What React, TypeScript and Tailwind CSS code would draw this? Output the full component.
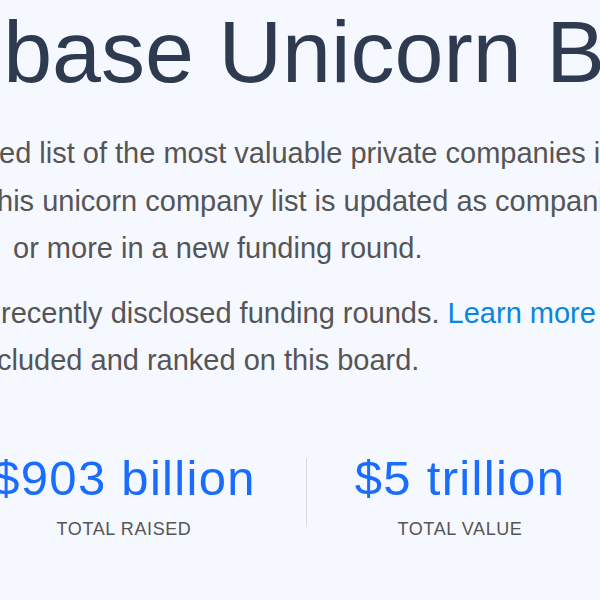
import React from "react";

const font = { fontFamily: '"Liberation Sans", Arial, sans-serif' };

type LineProps = { prefix: string; prefixClass: string; children: React.ReactNode };

// the cut-off start of each line sits in a right-aligned cell that overflows to the left
const Line: React.FC<LineProps> = ({ prefix, prefixClass, children }) => (
  <div className="flex whitespace-nowrap">
    <span className={`${prefixClass} shrink-0 flex justify-end`}>{prefix}</span>
    <span className="whitespace-pre">{children}</span>
  </div>
);

const Stat: React.FC<{ value: string; label: string; widthClass: string }> = ({ value, label, widthClass }) => (
  <div className={`${widthClass} shrink-0 flex flex-col items-center`}>
    <div className="text-[49px] leading-[66px] tracking-[1.3px] text-[#1a6cff] whitespace-nowrap">{value}</div>
    <div className="mt-[6px] text-[18px] leading-6 tracking-[0.6px] text-[#555555] uppercase whitespace-nowrap">{label}</div>
  </div>
);

export default function App() {
  return (
    <div className="w-[600px] h-[600px] overflow-hidden bg-[#f5f8ff]" style={font}>
      <div className="-ml-[606px] pt-[8px]">
        <h1 className="flex whitespace-nowrap text-[88px] leading-[88px] font-normal text-[#2e3a4f]">
          <span className="w-[800px] shrink-0 flex justify-end">The Crunchbase</span>
          <span className="whitespace-pre"> Unicorn Board</span>
        </h1>
      </div>

      <div className="-ml-[600px] mt-[34px] text-[29px] leading-[47.5px] text-[#555555]">
        <Line prefix="The Crunchbase Unicorn Board is a curat" prefixClass="w-[599px]">
          ed list of the most valuable private companies in the world.
        </Line>
        <Line prefix="Powered by Crunchbase's comprehensive data, t" prefixClass="w-[597px]">
          his unicorn company list is updated as companies are valued at $1 billion
        </Line>
        <Line prefix="" prefixClass="w-[613px]">
          or more in a new funding round.
        </Line>

        <div className="mt-[17px]">
          <Line prefix="Unicorn valuations are based on the most" prefixClass="w-[593px]">
            {" recently disclosed funding rounds. "}
            <a className="text-[#0a86e0]" href="#">Learn more</a>
            {" about how companies are"}
          </Line>
          <Line prefix="in" prefixClass="w-[597px]">
            cluded and ranked on this board.
          </Line>
        </div>
      </div>

      <div className="-ml-[58px] mt-[60px] flex items-center">
        <Stat value="$903 billion" label="Total Raised" widthClass="w-[364px]" />
        <div className="w-px h-[69px] shrink-0 bg-[#d9dde3]" />
        <Stat value="$5 trillion" label="Total Value" widthClass="w-[306px]" />
      </div>
    </div>
  );
}
